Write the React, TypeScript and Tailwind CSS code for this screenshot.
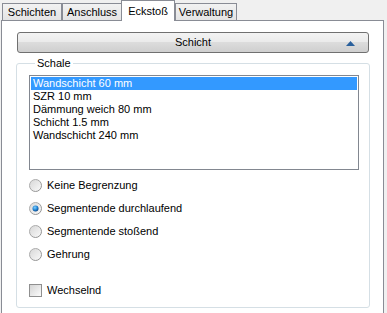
import React, { useState } from "react";

const tabs = ["Schichten", "Anschluss", "Eckstoß", "Verwaltung"];
const layers = ["Wandschicht 60 mm", "SZR 10 mm", "Dämmung weich 80 mm", "Schicht 1.5 mm", "Wandschicht 240 mm"];
const options = ["Keine Begrenzung", "Segmentende durchlaufend", "Segmentende stoßend", "Gehrung"];

function Radio({ checked }: { checked: boolean }) {
  return (
    <svg width="13" height="13" viewBox="0 0 13 13" className="shrink-0">
      <defs>
        <linearGradient id="rb" x1="0" y1="0" x2="1" y2="1">
          <stop offset="0" stopColor="#b7b7b7" />
          <stop offset="1" stopColor="#8a8a8a" />
        </linearGradient>
        <linearGradient id="rf" x1="0" y1="0" x2="1" y2="1">
          <stop offset="0" stopColor="#d6d6d6" />
          <stop offset="1" stopColor="#fbfbfb" />
        </linearGradient>
        <radialGradient id="rd" cx="0.4" cy="0.35" r="0.7">
          <stop offset="0" stopColor="#7fd0ff" />
          <stop offset="0.6" stopColor="#1e7fd0" />
          <stop offset="1" stopColor="#0d3f7a" />
        </radialGradient>
      </defs>
      <circle cx="6.5" cy="6.5" r="6" fill="url(#rf)" stroke="url(#rb)" strokeWidth="1" />
      {checked && <circle cx="6.5" cy="6.5" r="3" fill="url(#rd)" />}
    </svg>
  );
}

export default function App() {
  const [active, setActive] = useState(2);
  const [selected, setSelected] = useState(0);
  const [mode, setMode] = useState(1);
  const [alternating, setAlternating] = useState(false);

  return (
    <div className="w-[387px] h-[313px] overflow-hidden bg-[#f0f0f0] text-[11px] text-black" style={{ fontFamily: '"Liberation Sans", Arial, sans-serif' }}>
      {/* Tab strip */}
      <div className="flex items-end h-[20px] pl-[2px]">
        {tabs.map((t, i) =>
          i === active ? (
            <button
              key={t}
              onClick={() => setActive(i)}
              className="relative z-10 -ml-[1px] -mb-[1px] h-[21px] w-[54px] bg-white border border-b-0 border-[#898c95] leading-[17px] text-center"
            >
              {t}
            </button>
          ) : (
            <button
              key={t}
              onClick={() => setActive(i)}
              className={`h-[17px] border border-b-0 border-[#898c95] bg-[linear-gradient(#f2f2f2,#e4e4e4)] leading-[17px] text-center ${
                i === 3 ? "w-[62px]" : "w-[60px]"
              }`}
            >
              {t}
            </button>
          )
        )}
      </div>

      {/* Page */}
      <div className="ml-[1px] w-[383px] h-[300px] bg-white border border-[#898c95] pt-[11px] pl-[15px]">
        <button className="relative w-[352px] h-[21px] rounded-[3px] border border-[#707070] bg-[linear-gradient(#f3f3f3,#ebebeb_45%,#dcdcdc_50%,#cfcfcf)] text-center leading-[19px]">
          Schicht
          <svg width="9" height="5" viewBox="0 0 9 5" className="absolute right-[13px] top-[8px]">
            <polygon points="4.5,0 9,5 0,5" fill="#2a609c" />
          </svg>
        </button>

        {/* Group box */}
        <fieldset className="mt-[4px] -ml-[1px] w-[354px] h-[251px] border border-[#d5dfe5] rounded-[3px] pl-[12px] pr-0">
          <legend className="ml-[6px] px-[2px] leading-[13px]">Schale</legend>

          <div className="mt-[5px] w-[330px] h-[95px] border border-[#828790] bg-white p-[1px]">
            {layers.map((l, i) => (
              <div
                key={l}
                onClick={() => setSelected(i)}
                className={`h-[13px] leading-[13px] pl-[2px] ${i === selected ? "bg-[#3399ff] text-white" : ""}`}
              >
                {l}
              </div>
            ))}
          </div>

          <div className="mt-[9px] flex flex-col gap-[10px]">
            {options.map((o, i) => (
              <label key={o} className="flex items-center gap-[5px] h-[13px]" onClick={() => setMode(i)}>
                <Radio checked={mode === i} />
                <span className="leading-[13px]">{o}</span>
              </label>
            ))}
          </div>

          <label className="mt-[23px] flex items-center gap-[5px] h-[13px]" onClick={() => setAlternating(!alternating)}>
            <span className="w-[13px] h-[13px] shrink-0 border border-[#8f8f8f] bg-[linear-gradient(135deg,#d4d4d4,#fbfbfb)] flex items-center justify-center">
              {alternating && (
                <svg width="9" height="9" viewBox="0 0 9 9">
                  <path d="M1 4.5 L3.5 7 L8 1.5" stroke="#1f5e9e" strokeWidth="1.6" fill="none" />
                </svg>
              )}
            </span>
            <span className="leading-[13px]">Wechselnd</span>
          </label>
        </fieldset>
      </div>
    </div>
  );
}
